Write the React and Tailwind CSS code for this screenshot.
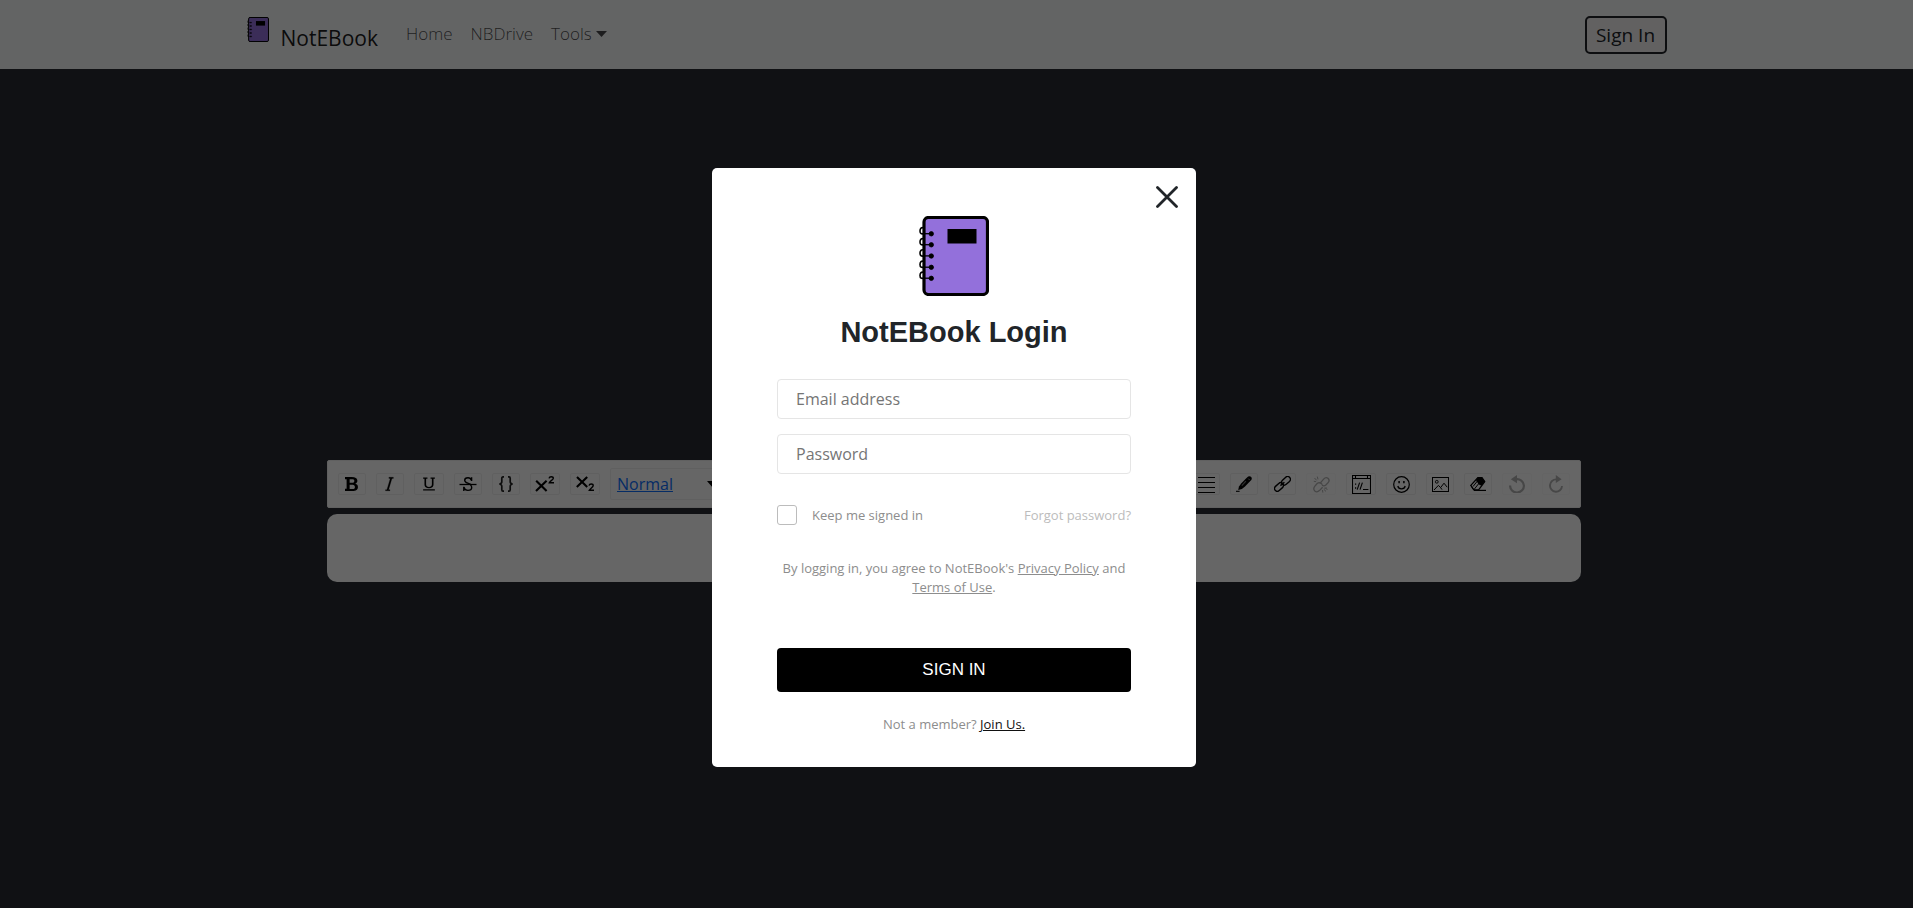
import React from 'react';

function NotebookLogo({ className }) {
  const rings = [14.5, 25.5, 36.7, 48, 59];
  return (
    <svg viewBox="0 0 70 80" className={className} aria-hidden="true">
      <rect x="5" y="1.5" width="63.5" height="77" rx="4.5" fill="#9370db" stroke="#000" strokeWidth="3.2" />
      <rect x="28.5" y="13" width="29" height="14.5" fill="#000" />
      {rings.map((y) => (
        <g key={y} stroke="#000">
          <path d={`M4.5 ${y - 2.6}C2.5 ${y - 3.6} 1 ${y - 2} 1 ${y + 0.4}C1 ${y + 3} 2.6 ${y + 4} 4.8 ${y + 3}`} fill="none" strokeWidth="1.6" />
          <path d={`M4.5 ${y + 3.2}H12`} strokeWidth="1.3" />
          <circle cx="12.3" cy={y + 3.3} r="2.2" fill="#000" strokeWidth="0.8" />
        </g>
      ))}
    </svg>
  );
}

const BoldIcon = () => (
  <svg width="14" height="14" viewBox="0 0 13 13">
    <path d="M6.236 0c1.652 0 2.94.298 3.866.893.925.595 1.388 1.485 1.388 2.669 0 .601-.173 1.139-.516 1.61-.343.474-.844.83-1.499 1.068.843.167 1.474.523 1.895 1.071.419.55.63 1.183.63 1.903 0 1.245-.444 2.187-1.33 2.825-.886.641-2.144.961-3.769.961H0v-2.167h1.494V2.167H0V0h6.236zM4.308 5.446h2.024c.752 0 1.33-.143 1.734-.43.405-.285.608-.701.608-1.25 0-.6-.204-1.044-.612-1.33-.408-.286-1.016-.427-1.826-.427H4.308v3.437zm0 1.803v4h2.593c.74 0 1.308-.147 1.706-.439.397-.293.596-.73.596-1.308 0-.73-.17-1.285-.51-1.664-.34-.39-.878-.589-1.61-.589H4.308z" fill="#000" fillRule="evenodd" />
  </svg>
);
const ItalicIcon = () => (
  <svg width="18" height="18" viewBox="0 0 16 16">
    <path d="M7 3V2h4v1H9.753l-3 10H8v1H4v-1h1.247l3-10H7z" fill="#000" stroke="#000" strokeWidth="0.2" />
  </svg>
);
const UnderlineIcon = () => (
  <svg width="16" height="18" viewBox="0 0 15 16">
    <path d="M6.045 2v.992L4.785 3v5.172c0 .859.243 1.512.727 1.957s1.124.668 1.918.668c.836 0 1.509-.221 2.019-.664.511-.442.766-1.096.766-1.961V3l-1.26-.008V2H13v.992L11.739 3v5.172c0 1.234-.398 2.181-1.195 2.84-.797.659-1.835.988-3.114.988-1.242 0-2.248-.329-3.017-.988-.769-.659-1.152-1.605-1.152-2.84V3L2 2.992V2h4.045zM2 13h11v1H2z" fill="#000" />
  </svg>
);
const StrikeIcon = () => (
  <svg width="18" height="16" viewBox="0 0 18 16" fill="none" stroke="#000">
    <path d="M0.5 8.5H17.5" strokeWidth="1.3" />
    <path d="M12.6 5V1.2M12.4 4.4C11.9 2.7 10.8 1.7 9 1.7 7 1.7 5.7 2.7 5.7 4.3c0 1.5 1 2.2 3 2.9l3 1.2M4.8 15v-4.2M5 11.4c.5 1.9 1.8 3 3.9 3 2.3 0 3.8-1.1 3.8-2.9 0-1.1-.4-1.9-1.3-2.5" strokeWidth="1.4" />
  </svg>
);
const BracesIcon = () => (
  <svg width="14" height="16" viewBox="0 0 14 16" fill="none" stroke="#222" strokeWidth="1.7">
    <path d="M5 .9H4Q2.8.9 2.8 2.3V5.8Q2.8 7.6.4 8 2.8 8.4 2.8 10.2v3.5Q2.8 15.1 4 15.1H5M9 .9h1Q11.2.9 11.2 2.3V5.8Q11.2 7.6 13.6 8 11.2 8.4 11.2 10.2v3.5Q11.2 15.1 10 15.1H9" />
  </svg>
);
const SuperIcon = () => (
  <svg width="20" height="16" viewBox="0 0 20 16" fill="none" stroke="#000">
    <path d="M1.2 4.8L11.6 15M11.6 4.8L1 15" strokeWidth="2.1" />
    <path d="M14 2.4C14.3 1.2 15.1.8 16.2.8c1.3 0 2.1.6 2.1 1.5C18.3 4 15.2 4.6 14.3 6.8H19" strokeWidth="1.4" />
  </svg>
);
const SubIcon = () => (
  <svg width="19" height="16" viewBox="0 0 19 16" fill="none" stroke="#000">
    <path d="M1 1L11.2 11M11.2 1L.8 11" strokeWidth="2.1" />
    <path d="M13 9.6c.3-1.2 1.1-1.6 2.2-1.6 1.3 0 2 .6 2 1.6 0 1.8-3 2.6-3.9 4.7H18" strokeWidth="1.4" />
  </svg>
);
const JustifyIcon = () => (
  <svg width="17" height="17" viewBox="0 0 17 17" stroke="#000">
    <path d="M0 1.5H17M0 6.5H17M0 11.5H17M0 16.5H17" strokeWidth="1" />
  </svg>
);
const PenIcon = () => (
  <svg width="16" height="16" viewBox="0 0 16 16">
    <path d="M12.2.5Q14-.4 15.2.9 16.3 2.3 15.3 4L9 10.6 5.9 13 2.2 14 3 10.5 5.4 7.3 10 2.6z" fill="#000" />
    <path d="M5.8 9.6L9.9 5.2" stroke="#777" strokeWidth="1.2" />
    <path d="M12.3 2.6L13.6 4" stroke="#fff" strokeWidth=".6" />
    <path d="M0 15.3H3.6" stroke="#000" strokeWidth="1.1" />
  </svg>
);
const LinkIcon = () => (
  <svg width="17" height="16" viewBox="0 0 17 16" fill="none" stroke="#000" strokeWidth="1.4">
    <rect x="-5" y="-2.8" width="10" height="5.6" rx="2.8" transform="translate(12 4.8) rotate(-42)" />
    <rect x="-5" y="-2.8" width="10" height="5.6" rx="2.8" transform="translate(5 11) rotate(-42)" />
    <path d="M6.4 9.6L10.4 6.2" />
  </svg>
);
const UnlinkIcon = () => (
  <svg width="17" height="17" viewBox="0 0 17 17" fill="none" stroke="#000" strokeWidth="1.3">
    <path d="M6.8 7.6L10.6 3.1Q12.8.7 15 2.3 17.2 4.5 15 6.8L12.6 9.2Q11 10.4 9 9.3M9.4 8.6L8 7.2Q6 5.9 3.9 7.8L1.7 10.4Q-.2 13 1.8 15 4 16.8 6.4 14.6L9.6 11.2" />
    <path d="M4.3.6L5 3.4M1.5 2L3.6 4.3M.8 5.3L3.2 5.7M11.2 12.2L13.8 11.9M10.8 13.3L13 15.4M9.5 14L9.8 16.6M12.5 12.5L14.5 13.4" strokeWidth="1" />
  </svg>
);
const EmbedIcon = () => (
  <svg width="19" height="19" viewBox="0 0 19 19" fill="none" stroke="#000">
    <path d="M.5.5H18.5V18.5H.5zM.5 3.5H18.5M3.5.5V3.5M15.5.5V3.5" strokeWidth="1.1" />
    <path d="M5.2 14.6L7.6 7.6M8 14.6L10.4 7.6M11 14.5H16.4" strokeWidth="1.1" />
    <path d="M3 9.2H4.2M3 13H4.2" strokeWidth="1.3" />
  </svg>
);
const SmileIcon = () => (
  <svg width="17" height="17" viewBox="0 0 17 17" fill="none" stroke="#000">
    <circle cx="8.5" cy="8.5" r="7.8" strokeWidth="1.2" />
    <path d="M4.8 10Q5.4 12.8 8.5 12.8T12.2 10" strokeWidth="1.2" />
    <path d="M6.1 5V7.2M10.9 5V7.2" strokeWidth="1.5" />
  </svg>
);
const ImageIcon = () => (
  <svg width="17" height="15" viewBox="0 0 17 15" fill="none" stroke="#000">
    <rect x=".5" y=".5" width="16" height="14" strokeWidth="1" />
    <circle cx="4.8" cy="4.8" r="1.4" strokeWidth=".9" />
    <path d="M2 13L6.4 8.4 8.6 10.6 12 6.2 15.2 10.2M8.6 10.6L10 12.6" strokeWidth="1" />
  </svg>
);
const EraserIcon = () => (
  <svg width="16" height="14" viewBox="0 0 16 14">
    <path d="M8 .5H12L14.8 4.6 8.6 12.8H3.8L.8 8.4z" fill="none" stroke="#000" strokeWidth="1.2" strokeLinejoin="round" />
    <path d="M8 .5H12L14.8 4.6 11.6 8.8 8.8 7.6 6 3.2z" fill="#000" />
    <path d="M.8 8.4L3.6 12.6M3 9.5L8.6 2.6M3.8 12.8L9.2 6" stroke="#000" strokeWidth="1" />
    <path d="M4 13.4H16" stroke="#000" strokeWidth="1.2" />
  </svg>
);
const UndoIcon = () => (
  <svg width="16" height="18" viewBox="0 0 16 18">
    <path d="M1.1 10.5A6.9 6.7 0 1 0 7 4.2" fill="none" stroke="#000" strokeWidth="2.2" />
    <path d="M8 0V8.2L1.8 4.2z" fill="#000" />
  </svg>
);
const RedoIcon = () => (
  <svg width="14" height="18" viewBox="0 0 14 18">
    <path d="M13 11A6 6.2 0 1 1 7.4 4.4" fill="none" stroke="#000" strokeWidth="1.9" />
    <path d="M6.8 0V8L12.6 4.2z" fill="#000" />
  </svg>
);

const inlineTools = [
  { label: 'Bold', Icon: BoldIcon },
  { label: 'Italic', Icon: ItalicIcon },
  { label: 'Underline', Icon: UnderlineIcon, wide: true },
  { label: 'Strikethrough', Icon: StrikeIcon },
  { label: 'Monospace', Icon: BracesIcon },
  { label: 'Superscript', Icon: SuperIcon, wide: true },
  { label: 'Subscript', Icon: SubIcon, wide: true },
];
const insertTools = [
  { label: 'Justify', Icon: JustifyIcon },
  { label: 'Color', Icon: PenIcon },
  { label: 'Link', Icon: LinkIcon },
  { label: 'Unlink', Icon: UnlinkIcon, wide: true, disabled: true },
  { label: 'Embed', Icon: EmbedIcon, wide: true },
  { label: 'Emoji', Icon: SmileIcon, wide: true },
  { label: 'Image', Icon: ImageIcon },
  { label: 'Eraser', Icon: EraserIcon },
  { label: 'Undo', Icon: UndoIcon, wide: true, disabled: true },
  { label: 'Redo', Icon: RedoIcon, disabled: true },
];

function ToolButton({ label, Icon, wide, disabled }) {
  return (
    <button
      type="button"
      aria-label={label}
      disabled={disabled}
      className={`flex h-[22px] shrink-0 items-center justify-center rounded-xs border border-[#f1f1f1] disabled:opacity-30 ${wide ? 'w-[30px]' : 'w-7'}`}
    >
      <Icon />
    </button>
  );
}

function Navbar() {
  return (
    <nav className="bg-[#f8f9fa]">
      <div className="mx-auto flex h-[69px] max-w-[1420px] items-center">
        <a href="#" className="flex text-[21px] leading-8 text-black/90">
          <NotebookLogo className="mt-px mr-3 h-[25px] w-[22px]" />
          <span className="pt-[6px]">NotEBook</span>
        </a>
        <div className="ml-7 flex gap-[18px] pb-px text-[17px] font-light text-black/70">
          <a href="#">Home</a>
          <a href="#">NBDrive</a>
          <button type="button" className="flex items-center gap-1">
            Tools
            <svg width="11" height="6" viewBox="0 0 11 6" fill="currentColor" aria-hidden="true">
              <path d="M0 0H11L5.5 6z" />
            </svg>
          </button>
        </div>
        <button type="button" className="ml-auto h-[38px] w-[82px] rounded-[5px] border-2 border-[#212529] bg-[#f5f3f3] text-[19px] leading-8 text-[#212529]">
          Sign In
        </button>
      </div>
    </nav>
  );
}

function Editor() {
  return (
    <main className="mx-auto mt-[391px] w-full max-w-[1259px] pr-[5px]">
      <div className="flex h-12 items-center gap-[10px] rounded-xs border border-[#f1f1f1] bg-white px-[10px]">
        {inlineTools.map((tool) => (
          <ToolButton key={tool.label} {...tool} />
        ))}
        <div className="relative flex h-8 w-[112px] items-center rounded-xs border border-[#f1f1f1]">
          <select aria-label="Block type" className="h-full w-full appearance-none bg-transparent pl-[6px] text-base text-[#0d6efd] underline">
            <option>Normal</option>
          </select>
          <svg className="pointer-events-none absolute right-[2px]" width="12" height="7" viewBox="0 0 12 7" aria-hidden="true">
            <path d="M0 0H12L6 7z" />
          </svg>
        </div>
        <div className="ml-auto flex gap-[10px]">
          {insertTools.map((tool) => (
            <ToolButton key={tool.label} {...tool} />
          ))}
        </div>
      </div>
      <div role="textbox" aria-label="Note" className="mt-[6px] h-[68px] rounded-[10px] bg-white" />
    </main>
  );
}

function LoginDialog() {
  return (
    <div className="fixed inset-0 flex items-start justify-center overflow-auto bg-black/60 pt-[168px] pr-[5px]">
      <form
        role="dialog"
        aria-label="NotEBook Login"
        className="relative flex w-[484px] flex-col rounded-[5px] bg-white px-[65px] pt-12 pb-[33px] text-[13px] leading-[19px] text-[#8d8d8d]"
      >
        <button type="button" aria-label="Close" className="absolute top-[18px] right-[18px]">
          <svg width="22" height="22" viewBox="0 0 22 22" fill="none" stroke="#212529" strokeWidth="2.8" strokeLinecap="round">
            <path d="M1.5 1.5L20.5 20.5M20.5 1.5L1.5 20.5" />
          </svg>
        </button>
        <NotebookLogo className="h-20 w-[70px] self-center" />
        <h1 className="mt-[18px] text-center font-['Liberation_Sans',sans-serif] text-[29px] leading-9 font-bold text-[#212529]">NotEBook Login</h1>
        <input
          type="email"
          aria-label="Email address"
          placeholder="Email address"
          className="mt-[29px] h-10 rounded-[4px] border border-[#e5e5e5] px-[18px] text-base text-[#111] placeholder:text-[#757575]"
        />
        <input
          type="password"
          aria-label="Password"
          placeholder="Password"
          className="mt-[15px] h-10 rounded-[4px] border border-[#e5e5e5] px-[18px] text-base text-[#111] placeholder:text-[#757575]"
        />
        <div className="mt-[31px] flex items-center justify-between">
          <label className="flex items-center gap-[15px]">
            <input type="checkbox" className="size-5 appearance-none rounded-[3px] border border-[#bcbcbc] bg-white" />
            Keep me signed in
          </label>
          <a href="#" className="text-[#bcbcbc]">Forgot password?</a>
        </div>
        <p className="mt-[34px] text-center">
          By logging in, you agree to NotEBook's{' '}
          <a href="#" className="underline">Privacy Policy</a> and{' '}
          <a href="#" className="underline">Terms of Use</a>.
        </p>
        <button type="submit" className="mt-[51px] h-11 rounded-[4px] bg-black pb-px font-['Liberation_Sans',sans-serif] text-[17px] text-white">
          SIGN IN
        </button>
        <p className="mt-[23px] text-center">
          Not a member? <a href="#" className="text-[#111] underline">Join Us.</a>
        </p>
      </form>
    </div>
  );
}

export default function App() {
  return (
    <div className="min-h-screen bg-[#282c34] font-['Open_Sans','Noto_Sans',sans-serif]">
      <Navbar />
      <Editor />
      <LoginDialog />
    </div>
  );
}
